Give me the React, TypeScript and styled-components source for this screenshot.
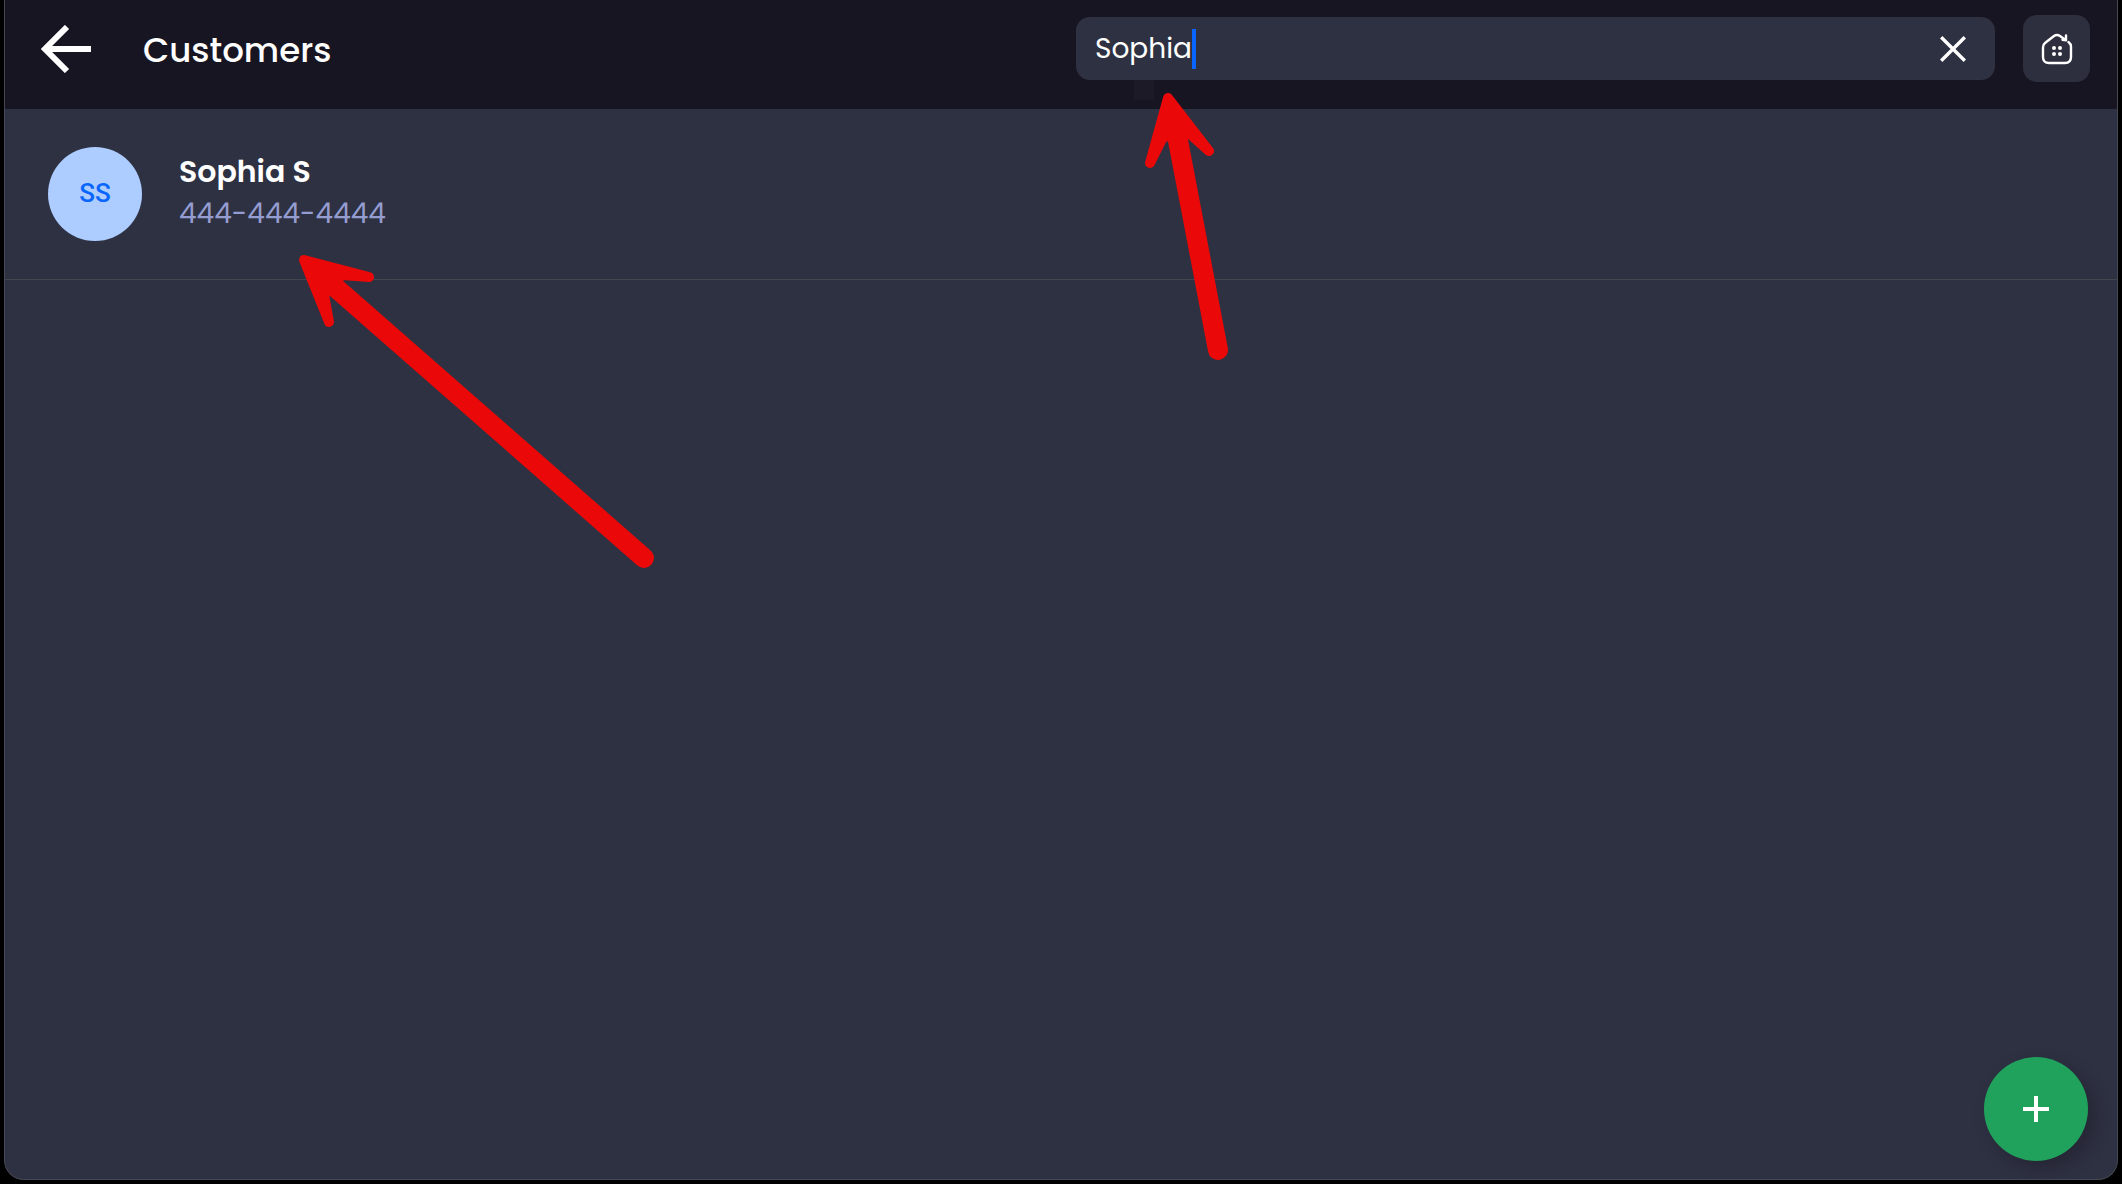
import React, { useRef, useState } from "react";
import styled, { createGlobalStyle } from "styled-components";

const GlobalStyle = createGlobalStyle`
  *, *::before, *::after { box-sizing: border-box; }
  body {
    margin: 0;
    background: #000;
    font-family: Poppins, Inter, "Open Sans", sans-serif;
    color: #fff;
  }
  button, input { font: inherit; color: inherit; border: 0; padding: 0; margin: 0; }
  button { cursor: pointer; }
  svg { display: block; }
`;

const Page = styled.div`
  min-height: 100vh;
  padding: 0 4px 4px;
  display: flex;
`;

const Frame = styled.div`
  position: relative;
  flex: 1;
  display: flex;
  flex-direction: column;
  border: 1px solid #464855;
  border-top: 0;
  border-radius: 0 0 20px 20px;
  background: #2e3142;
`;

const Header = styled.header`
  display: grid;
  grid-template-columns: 1fr 1fr;
  align-items: center;
  padding: 15px 0 27px;
  background: #181522;
`;

const TitleGroup = styled.div`
  display: flex;
  align-items: center;
  gap: 52px;
  padding-left: 36px;
`;

const PlainButton = styled.button`
  background: none;
`;

const Title = styled.h1`
  margin: 0;
  padding-top: 2px;
  font-size: 34px;
  line-height: 48px;
  font-weight: 500;
`;

const Tools = styled.div`
  display: flex;
  align-items: center;
  gap: 28px;
  padding: 0 27px 0 15px;
`;

const SearchBox = styled.div`
  position: relative;
  flex: 1;
  display: flex;
  align-items: center;
  justify-content: space-between;
  height: 63px;
  padding: 0 29px 0 19px;
  border-radius: 14px;
  background: #2e3142;
`;

const SearchField = styled.label`
  flex: 1;
  display: flex;
  align-items: center;
  cursor: text;
`;

const SearchInput = styled.input`
  field-sizing: content;
  background: none;
  outline: none;
  caret-color: transparent;
  font-size: 28px;
  line-height: 40px;
`;

const Caret = styled.span`
  width: 4px;
  height: 40px;
  background: #0866ff;
`;

const CaretHandle = styled.span`
  position: absolute;
  top: 63px;
  left: 58px;
  width: 20px;
  height: 20px;
  background: #1c1a26;
`;

const HomeButton = styled.button`
  display: grid;
  place-items: center;
  width: 67px;
  height: 67px;
  border-radius: 14px;
  background: #2d2f3e;
`;

const List = styled.ul`
  margin: 0;
  padding: 0;
  list-style: none;
`;

const Row = styled.li`
  position: relative;
  display: flex;
  align-items: center;
  gap: 37px;
  padding: 38px 43px;
  border-bottom: 1px solid #454550;
`;

const Avatar = styled.div`
  display: grid;
  place-items: center;
  width: 94px;
  height: 94px;
  padding-bottom: 2px;
  border-radius: 50%;
  background: #adccff;
  color: #0866ff;
  font-family: Roboto, Inter, sans-serif;
  font-size: 26px;
  line-height: 32px;
  font-weight: 500;
`;

const Details = styled.div`
  display: flex;
  flex-direction: column;
  padding-bottom: 3px;
`;

const Name = styled.span`
  font-size: 30px;
  line-height: 42px;
  font-weight: 600;
`;

const Phone = styled.a`
  color: #949cd0;
  font-size: 28px;
  line-height: 42px;
  text-decoration: none;
`;

const AddButton = styled.button`
  position: absolute;
  right: 29px;
  bottom: 18px;
  display: grid;
  place-items: center;
  width: 104px;
  height: 104px;
  border-radius: 50%;
  background: #20a15c;
  box-shadow: 7px 7px 16px rgba(24, 21, 34, 0.4);
`;

const Pointer = styled.svg<{ $left: number; $top: number }>`
  position: absolute;
  z-index: 1;
  left: ${(p) => p.$left}px;
  top: ${(p) => p.$top}px;
  pointer-events: none;
  fill: #ea0808;
  stroke: #ea0808;
  stroke-linejoin: round;
  stroke-linecap: round;
`;

function BackIcon() {
  return (
    <svg width="50" height="48" viewBox="0 0 50 48" fill="none" stroke="#fff" strokeWidth="6">
      <path d="M26 2 4 24l22 22M4 24h46" />
    </svg>
  );
}

function CloseIcon() {
  return (
    <svg width="26" height="26" viewBox="0 0 26 26" stroke="#fff" strokeWidth="3.4">
      <path d="M1.200 1.200l23.600 23.600M24.800 1.200L1.200 24.800" />
    </svg>
  );
}

function HomeIcon() {
  return (
    <svg width="32" height="32" viewBox="0 0 32 32" fill="none" stroke="#fff" strokeWidth="2.4" strokeLinecap="round" strokeLinejoin="round">
      <path d="M27.500 9C29 10.200 30 11.500 30 13.500V24q0 6-6 6H8q-6 0-6-6V14.500q0-3 2.300-4.700L13 3q3-2 6 0l6 4.300V2.500M25 7.300l-3.500-.6" />
      <g fill="#fff" stroke="none">
        <circle cx="13" cy="15" r="2" />
        <circle cx="19" cy="15" r="2" />
        <circle cx="13" cy="21" r="2" />
        <circle cx="19" cy="21" r="2" />
      </g>
    </svg>
  );
}

function PlusIcon() {
  return (
    <svg width="26" height="26" viewBox="0 0 26 26" stroke="#fff" strokeWidth="4">
      <path d="M13 0v26M0 13h26" />
    </svg>
  );
}

const customers = [{ initials: "SS", name: "Sophia S", phone: "444-444-4444" }];

export default function App() {
  const [query, setQuery] = useState("Sophia");
  const input = useRef<HTMLInputElement>(null);
  const clear = () => {
    setQuery("");
    input.current?.focus();
  };
  const matches = customers.filter((c) => c.name.toLowerCase().includes(query.toLowerCase()));

  return (
    <>
      <GlobalStyle />
      <Page>
        <Frame>
          <Header>
            <TitleGroup>
              <PlainButton aria-label="Back">
                <BackIcon />
              </PlainButton>
              <Title>Customers</Title>
            </TitleGroup>
            <Tools>
              <SearchBox>
                <CaretHandle />
                <SearchField>
                  <SearchInput
                    ref={input}
                    aria-label="Search customers"
                    value={query}
                    onChange={(e) => setQuery(e.target.value)}
                  />
                  <Caret />
                </SearchField>
                <PlainButton aria-label="Clear search" onClick={clear}>
                  <CloseIcon />
                </PlainButton>
                <Pointer $left={64} $top={71} width="94" height="276" viewBox="0 0 94 276" aria-hidden="true">
                  <path strokeWidth="10" d="M28 10 10 75 23 49 49 45 69 63Z" />
                  <path strokeWidth="20" d="M36 42 78 262" />
                </Pointer>
              </SearchBox>
              <HomeButton aria-label="Home">
                <HomeIcon />
              </HomeButton>
            </Tools>
          </Header>
          <List>
            {matches.map((c) => (
              <Row key={c.phone}>
                <Avatar>{c.initials}</Avatar>
                <Details>
                  <Name>{c.name}</Name>
                  <Phone href={`tel:${c.phone}`}>{c.phone}</Phone>
                </Details>
                <Pointer $left={289} $top={141} width="364" height="324" viewBox="0 0 364 324" aria-hidden="true">
                  <path strokeWidth="10" d="M10 10 75 27 48 25 30 45 35 72Z" />
                  <path strokeWidth="20" d="M42 38 350 308" />
                </Pointer>
              </Row>
            ))}
          </List>
          <AddButton aria-label="Add customer">
            <PlusIcon />
          </AddButton>
        </Frame>
      </Page>
    </>
  );
}
